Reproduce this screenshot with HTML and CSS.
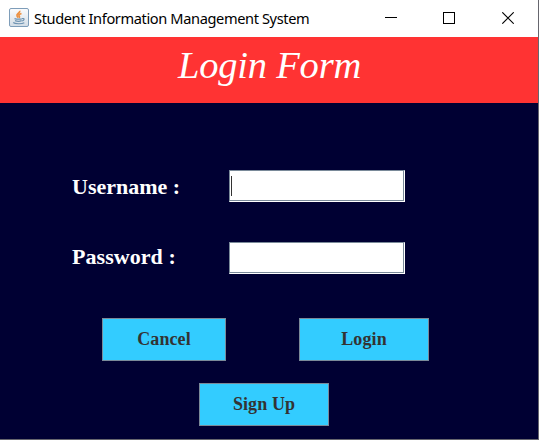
FILE: index.html
```html
<!DOCTYPE html>
<html lang="en">
<head>
<meta charset="utf-8">
<title>Student Information Management System</title>
<link rel="stylesheet" href="styles.css">
</head>
<body>
<div class="window">
  <div class="titlebar">
    <svg class="java" width="20" height="19" viewBox="0 0 20 19">
      <defs><linearGradient id="g" x1="0" y1="0" x2="0" y2="1"><stop offset="0" stop-color="#fbfcfd"/><stop offset="1" stop-color="#d3dde6"/></linearGradient></defs>
      <rect x=".5" y=".5" width="19" height="18" rx="1.500" fill="url(#g)" stroke="#7e9db9"/>
      <path d="M10.700 2.800C11.500 5 7.200 5.500 8 7.800C8.300 8.700 9 9.300 9.200 9.700M12.500 5.500C10 6.300 9.400 7.200 10.300 8.200C10.800 8.900 10.400 9.400 10 9.800" fill="none" stroke="#ec9142" stroke-width="1.700"/>
      <path d="M5.500 10.600C8 11.300 11 11.300 13.300 10.600M6 12.600C8 13.400 11 13.400 12.700 12.600M13 10.600C16 10 15.500 12.500 13 13M4.200 14.500C6 16.100 13 16.100 15.300 14.700" fill="none" stroke="#6f94b2" stroke-width="1.200"/>
    </svg>
    <span class="caption">Student Information Management System</span>
    <svg class="controls" width="129" height="12" viewBox="0 0 129 12" fill="none" stroke="#000">
      <path d="M0 5.500H12" shape-rendering="crispEdges"/>
      <rect x="58.500" y=".5" width="11" height="11" shape-rendering="crispEdges"/>
      <path d="M117.300 .3L128.700 11.700M128.700 .3L117.300 11.700" stroke-width="1.100"/>
    </svg>
  </div>
  <div class="banner"><h1>Login Form</h1></div>
  <form class="form">
    <div class="row">
      <label class="user">Username :</label>
      <div class="field"><span class="caret"></span></div>
    </div>
    <div class="row">
      <label class="pass">Password :</label>
      <div class="field"></div>
    </div>
    <div class="actions">
      <button type="button" class="cancel">Cancel</button>
      <button type="button" class="login">Login</button>
    </div>
    <button type="button" class="signup">Sign Up</button>
  </form>
</div>
</body>
</html>
```
FILE: styles.css
```css
* { box-sizing: border-box; }
body { margin: 0; background: #000033; }
.window {
  width: 539px;
  height: 440px;
  overflow: hidden;
  background: #000033;
  border-right: 1px solid #66666e;
  border-bottom: 1px solid #66666e;
}
.titlebar {
  display: flex;
  height: 37px;
  padding-left: 9px;
  background: #fff;
}
.java { flex: none; margin-top: 8px; }
.caption {
  width: 351px;
  padding-left: 5px;
  font: 14.6px/37px "Noto Sans", "Open Sans", sans-serif;
  letter-spacing: -0.38px;
  white-space: nowrap;
  color: #000;
}
.controls { flex: none; margin: 12px 0 0 5px; }
.banner { height: 66px; padding-left: 178px; background: #ff3333; }
h1 {
  margin: 0;
  font: italic 38.500px/57px "Liberation Serif", serif;
  letter-spacing: -0.2px;
  white-space: nowrap;
  color: #fff;
}
.form { padding-top: 67px; }
.row {
  display: grid;
  grid-template-columns: 157px 176px;
  height: 32px;
  margin: 0 0 40px 72px;
}
label {
  font: bold 22px/34px "Liberation Serif", serif;
  white-space: nowrap;
  color: #fff;
}
.pass { line-height: 30px; letter-spacing: 0.05px; }
.field {
  height: 32px;
  padding: 5px 0 0 1px;
  background: #fff;
  border: 1px solid #7a8a99;
  border-right-color: #fff;
  border-bottom-color: #fff;
  box-shadow: inset -1px -1px #7a8a99;
}
.caret { display: block; width: 1px; height: 20px; background: #333; }
.actions { display: flex; gap: 73px; margin: 44px 0 22px 102px; }
button {
  display: block;
  width: 130px;
  height: 43px;
  padding: 0 0 2px;
  background: #33ccff;
  border: 1px solid #7a8a99;
  border-radius: 0;
  font: bold 18px/38px "Liberation Serif", serif;
  letter-spacing: 0.1px;
  color: #333;
}
.cancel { width: 124px; }
.signup { margin-left: 199px; }
```
